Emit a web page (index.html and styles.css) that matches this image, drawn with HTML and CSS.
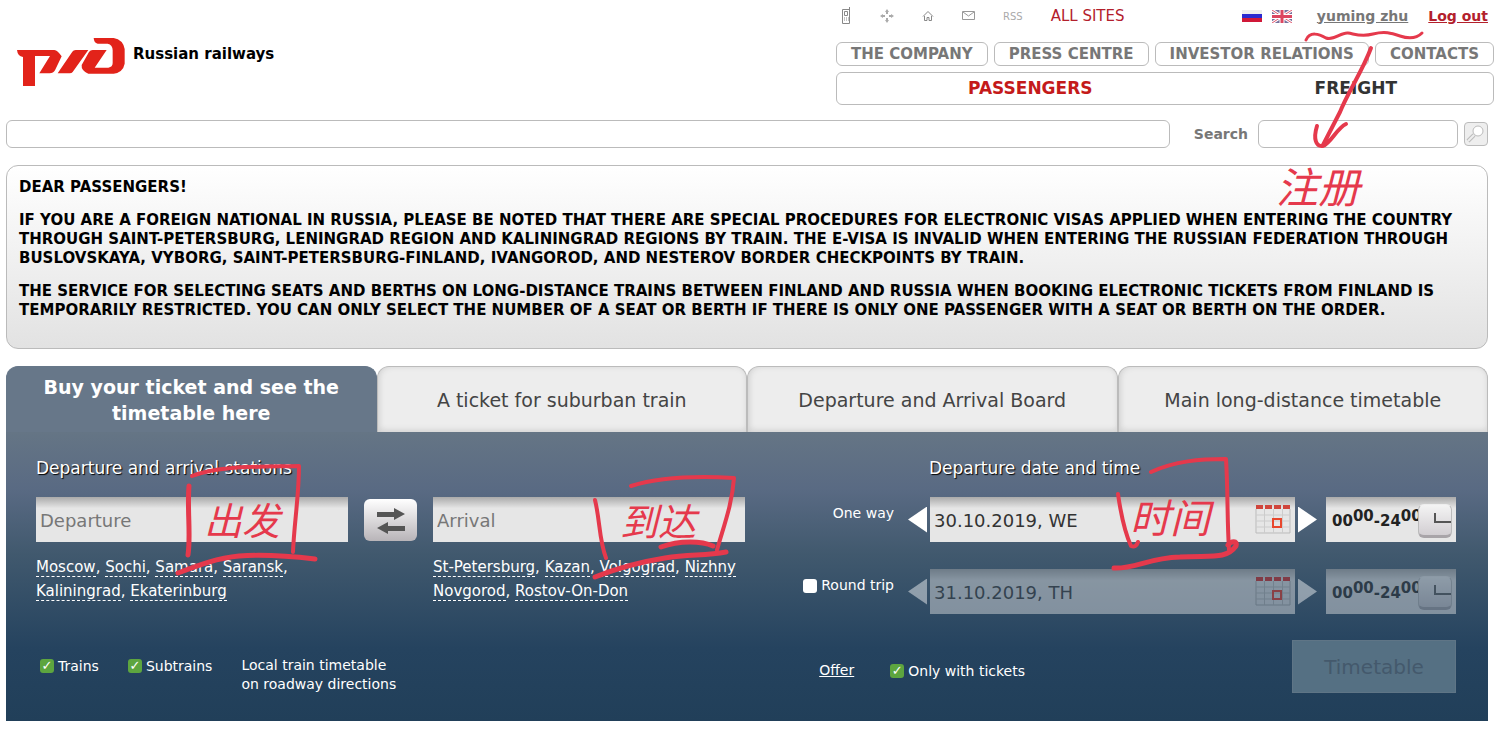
FILE: index.html
```
<!DOCTYPE html>
<html lang="en">
<head>
    <meta charset="utf-8">
    <title>Russian railways</title>
    <link rel="stylesheet" href="styles.css">
</head>
<body>
    <header class="header">
        <a href="#" class="logo">
            <svg width="108" height="50" viewBox="0 0 324 150" fill="#e2231a">
                <path d="M0 39H112Q122 40 134 58L114 100Q109 109 98 109H67L99 57H54V147H18V60Q2 58 0 39Z"/>
                <path d="M122 109L166 44Q169 39 176 39H214L167 105Q164 109 158 109Z"/>
                <path d="M230 3H290Q318 8 323 36V80Q318 106 290 110H214Q192 101 194 84L216 45Q220 39 227 39H269L233 92H274Q287 90 287 78V40Q287 23 272 20H242Q231 18 230 3Z"/>
            </svg>
            <span>Russian railways</span>
        </a>
        <div class="header-right">
            <div class="top-row">
                <div class="tools">
                    <a href="#" aria-label="Mobile"><svg width="12" height="18" viewBox="0 0 12 18" fill="none" stroke="#888"><path d="M2.500 2.500H9.500V16.500H2.500ZM9.500 0V3M4.500 4.500H7.500V8.500H4.500Z"/><path d="M4 11H9M4 13H9" stroke-dasharray="1 1"/></svg></a>
                    <a href="#" aria-label="Site map"><svg width="14" height="14" viewBox="0 0 14 14" fill="#aaa"><path d="M7 0L9 3H8V5H6V3H5ZM7 14L5 11H6V9H8V11H9ZM0 7L3 5V6H5V8H3V9ZM14 7L11 9V8H9V6H11V5Z"/></svg></a>
                    <a href="#" aria-label="Home"><svg width="12" height="12" viewBox="0 0 12 12" fill="none" stroke="#888"><path d="M1 6.500L6 1.500L11 6.500M2.500 6V10.500H5V7.500H7V10.500H9.500V6"/></svg></a>
                    <a href="#" aria-label="Mail"><svg width="13" height="10" viewBox="0 0 13 10" fill="none" stroke="#999"><path d="M.5.5H12.500V8.500H.5ZM1 1L6.500 5L12 1"/></svg></a>
                    <a href="#" class="rss">RSS</a>
                    <a href="#" class="all-sites">ALL SITES</a>
                </div>
                <div class="account">
                    <a href="#" aria-label="Russian"><svg width="20" height="12" viewBox="0 0 20 12"><path fill="#eee" d="M0 0H20V4H0Z"/><path fill="#2a2ad0" d="M0 4H20V8H0Z"/><path fill="#d01838" d="M0 8H20V12H0Z"/></svg></a>
                    <a href="#" aria-label="English"><svg width="20" height="13" viewBox="0 0 20 13"><path fill="#77709b" d="M0 0H20V13H0Z"/><path stroke="#fff" stroke-width="3" d="M0 0L20 13M20 0L0 13"/><path stroke="#e0556c" d="M0 0L20 13M20 0L0 13"/><path stroke="#fff" stroke-width="5" d="M10 0V13M0 6.500H20"/><path stroke="#dc4660" stroke-width="3" d="M10 0V13M0 6.500H20"/></svg></a>
                    <a href="#" class="user">yuming zhu</a>
                    <a href="#" class="logout">Log out</a>
                </div>
            </div>
            <nav class="nav">
                <a href="#">THE COMPANY</a>
                <a href="#">PRESS CENTRE</a>
                <a href="#">INVESTOR RELATIONS</a>
                <a href="#">CONTACTS</a>
            </nav>
            <nav class="main-nav">
                <a href="#" class="active">PASSENGERS</a>
                <a href="#">FREIGHT</a>
            </nav>
            <!-- hand-drawn note: register -->
            <svg class="ink note-register" width="150" height="190" viewBox="1290 25 150 190" aria-hidden="true">
                <path stroke-width="3" d="M1306 40C1310 31 1319 34 1326 38C1334 41 1341 32 1348 33S1361 37 1373 34S1391 33 1400 36S1417 38 1422 33"/>
                <path stroke-width="4" d="M1371 48C1362 72 1348 92 1340 112L1323 145M1317 126C1313 139 1316 147 1323 146C1331 143 1337 128 1346 124"/>
                <text x="1276" y="203" font-size="42">注册</text>
            </svg>
        </div>
    </header>

    <form class="search-row">
        <div class="crumbs"></div>
        <label for="search">Search</label>
        <input type="text" id="search">
        <button type="button" aria-label="Search"><svg width="22" height="22" viewBox="0 0 22 22" fill="none"><path d="M9 12L3 18" stroke="#bbb" stroke-width="4"/><path d="M9 12L3 18" stroke="#eee" stroke-width="2"/><circle cx="13" cy="8" r="5" stroke="#bbb" stroke-width="1" fill="#fff"/></svg></button>
    </form>

    <section class="notice">
        <p>DEAR PASSENGERS!</p>
        <p>IF YOU ARE A FOREIGN NATIONAL IN RUSSIA, PLEASE BE NOTED THAT THERE ARE SPECIAL PROCEDURES FOR ELECTRONIC VISAS APPLIED WHEN ENTERING THE COUNTRY THROUGH SAINT-PETERSBURG, LENINGRAD REGION AND KALININGRAD REGIONS BY TRAIN. THE E-VISA IS INVALID WHEN ENTERING THE RUSSIAN FEDERATION THROUGH BUSLOVSKAYA, VYBORG, SAINT-PETERSBURG-FINLAND, IVANGOROD, AND NESTEROV BORDER CHECKPOINTS BY TRAIN.</p>
        <p>THE SERVICE FOR SELECTING SEATS AND BERTHS ON LONG-DISTANCE TRAINS BETWEEN FINLAND AND RUSSIA WHEN BOOKING ELECTRONIC TICKETS FROM FINLAND IS TEMPORARILY RESTRICTED. YOU CAN ONLY SELECT THE NUMBER OF A SEAT OR BERTH IF THERE IS ONLY ONE PASSENGER WITH A SEAT OR BERTH ON THE ORDER.</p>
    </section>

    <div class="tabs">
        <button type="button" class="tab active">Buy your ticket and see the timetable here</button>
        <button type="button" class="tab">A ticket for suburban train</button>
        <button type="button" class="tab">Departure and Arrival Board</button>
        <button type="button" class="tab">Main long-distance timetable</button>
    </div>

    <form class="panel">
        <div class="search-form">
            <div class="stations">
                <h2>Departure and arrival stations</h2>
                <div class="station-row">
                    <div class="station">
                        <input type="text" class="field" placeholder="Departure" aria-label="Departure">
                        <p class="cities"><a href="#">Moscow</a>, <a href="#">Sochi</a>, <a href="#">Samara</a>, <a href="#">Saransk</a>, <a href="#">Kaliningrad</a>, <a href="#">Ekaterinburg</a></p>
                        <svg class="ink note-departure" width="150" height="120" viewBox="170 458 150 120" aria-hidden="true">
                            <path stroke-width="5" d="M190 486C188 510 192 535 189 555"/>
                            <path stroke-width="4" d="M193 476C218 466 250 467 300 466C300 495 295 525 294 552"/>
                            <path stroke-width="5" d="M179 573C200 565 218 558 240 556C268 554 290 556 316 559"/>
                            <text x="205" y="535" font-size="38">出发</text>
                        </svg>
                    </div>
                    <button type="button" class="swap" aria-label="Swap stations"><svg width="30" height="28" viewBox="0 0 30 28" fill="#555"><path d="M1 6H18V2L29 8L18 14V11H1ZM29 25H12V28L1 22L12 16V20H29Z"/></svg></button>
                    <div class="station">
                        <input type="text" class="field" placeholder="Arrival" aria-label="Arrival">
                        <p class="cities"><a href="#">St-Petersburg</a>, <a href="#">Kazan</a>, <a href="#">Volgograd</a>, <a href="#">Nizhny Novgorod</a>, <a href="#">Rostov-On-Don</a></p>
                        <svg class="ink note-arrival" width="160" height="110" viewBox="585 472 160 110" aria-hidden="true">
                            <path stroke-width="4" d="M595 500C600 520 599 540 606 558M631 486C660 477 700 476 734 478C732 505 724 525 717 550"/>
                            <path stroke-width="5" d="M595 577C620 567 640 562 665 558S705 556 726 552M661 547C680 540 702 541 713 546"/>
                            <text x="620" y="536" font-size="38">到达</text>
                        </svg>
                    </div>
                </div>
            </div>

            <div class="dates">
                <h2>Departure date and time</h2>
                <div class="date-row">
                    <label class="trip" for="date-there">One way</label>
                    <button type="button" class="arrow prev" aria-label="Previous day"></button>
                    <div class="date">
                        <input type="text" class="field" id="date-there" value="30.10.2019, WE">
                        <button type="button" class="calendar" aria-label="Calendar"><svg width="36" height="30" viewBox="0 0 36 30" fill="none"><path stroke="#bbb" d="M1 5V29H35V5"/><path stroke="#ccc" d="M1 11H35M1 17H35M1 23H35M9.500 5V29M18.500 5V29M27.500 5V29"/><path stroke="#d0453c" stroke-width="4" stroke-dasharray="7 2" d="M1 3H35"/><path stroke="#e8472d" stroke-width="2" d="M18 15H26V23H18Z"/></svg></button>
                    </div>
                    <button type="button" class="arrow next" aria-label="Next day"></button>
                    <button type="button" class="time"><span>00<sup>00</sup>-24<sup>00</sup></span><i class="clock"></i></button>
                </div>
                <div class="date-row">
                    <label class="trip"><input type="checkbox" class="check"> Round trip</label>
                    <button type="button" class="arrow prev dim" disabled aria-label="Previous day"></button>
                    <div class="date dim">
                        <input type="text" class="field" value="31.10.2019, TH" aria-label="Return date" disabled>
                        <button type="button" class="calendar" aria-label="Calendar" disabled><svg width="36" height="30" viewBox="0 0 36 30" fill="none"><path stroke="#aaa" d="M1 5V29H35V5"/><path stroke="#bbb" d="M1 11H35M1 17H35M1 23H35M9.500 5V29M18.500 5V29M27.500 5V29"/><path stroke="#d8201c" stroke-width="4" stroke-dasharray="7 2" d="M1 3H35"/><path stroke="#f0301c" stroke-width="2" d="M18 15H26V23H18Z"/></svg></button>
                    </div>
                    <button type="button" class="arrow next dim" disabled aria-label="Next day"></button>
                    <button type="button" class="time dim" disabled><span>00<sup>00</sup>-24<sup>00</sup></span><i class="clock"></i></button>
                </div>
                <svg class="ink note-time" width="140" height="124" viewBox="1105 452 140 124" aria-hidden="true">
                    <path stroke-width="4" d="M1118 494C1121 515 1126 535 1131 546Q1136 548 1138 542M1151 472C1175 461 1200 459 1226 459C1228 490 1227 518 1229 550"/>
                    <path stroke-width="5" d="M1114 568C1135 569 1148 558 1180 557C1210 555 1226 560 1236 546C1238 540 1231 541 1228 545"/>
                    <text x="1130" y="533" font-size="40">时间</text>
                </svg>
            </div>
        </div>

        <div class="bottom-row">
            <div class="filters">
                <label><input type="checkbox" class="check" checked>Trains</label>
                <label><input type="checkbox" class="check" checked>Subtrains</label>
                <a href="#" class="local">Local train timetable<br>on roadway directions</a>
            </div>
            <div class="submit">
                <a href="#" class="offer">Offer</a>
                <label><input type="checkbox" class="check" checked>Only with tickets</label>
                <button type="submit" disabled>Timetable</button>
            </div>
        </div>
    </form>
</body>
</html>
```
FILE: styles.css
```
* {
    box-sizing: border-box;
}

body {
    margin: 0;
    padding: 0 12px 12px 6px;
    font-family: Verdana, "DejaVu Sans", sans-serif;
    font-size: 14px;
    line-height: 19px;
    color: #000;
    background: #fff;
}

button,
input {
    font-family: inherit;
    margin: 0;
}

button {
    padding: 0;
    border: 0;
    background: none;
    cursor: pointer;
}

h2 {
    margin: 0;
    font-size: 17px;
    line-height: 20px;
    font-weight: normal;
    text-shadow: 1px 1px 1px #000;
}

svg {
    display: block;
}

/* header */
.header {
    display: flex;
    justify-content: space-between;
    margin-right: -6px;
}

.logo {
    display: flex;
    align-items: flex-start;
    gap: 8px;
    padding: 37px 0 0 11px;
    color: #000;
    font-size: 15px;
    font-weight: bold;
    text-decoration: none;
}

.logo span {
    margin-top: 8px;
}

.header-right {
    position: relative;
    width: 658px;
}

.top-row {
    display: flex;
    justify-content: space-between;
    height: 42px;
    padding: 6px 6px 0 4px;
}

.tools,
.account {
    display: flex;
    align-items: center;
    height: 20px;
}

.tools {
    gap: 28px;
}

.rss {
    color: #aaa;
    font-size: 10px;
    text-decoration: none;
}

.all-sites {
    color: #b3202c;
    font-size: 15px;
    text-decoration: none;
}

.account {
    gap: 10px;
    font-weight: bold;
}

.user {
    margin: 0 10px 0 15px;
    color: #777;
}

.logout {
    color: #b3202c;
}

.nav {
    display: flex;
    gap: 6px;
}

.nav a {
    flex: auto;
    height: 24px;
    border: 1px solid #bbb;
    border-radius: 6px;
    color: #777;
    font-size: 15px;
    font-weight: bold;
    line-height: 22px;
    text-align: center;
    text-decoration: none;
}

.main-nav {
    display: flex;
    justify-content: space-between;
    margin-top: 6px;
    padding: 0 96px 0 131px;
    border: 1px solid #bbb;
    border-radius: 6px;
    line-height: 31px;
}

.main-nav a {
    color: #333;
    font-size: 17px;
    font-weight: bold;
    text-decoration: none;
}

.main-nav .active {
    color: #c41a1a;
}

/* search */
.search-row {
    display: flex;
    align-items: center;
    margin: 15px 0 17px;
}

.crumbs {
    flex: 1;
    height: 28px;
    border: 1px solid #bbb;
    border-radius: 6px;
}

.search-row label {
    margin: 0 10px 0 24px;
    color: #777;
    font-weight: bold;
}

.search-row input {
    width: 200px;
    height: 28px;
    border: 1px solid #bbb;
    border-radius: 6px;
}

.search-row button {
    margin-left: 6px;
    border: 1px solid #bbb;
    border-radius: 4px;
    background: #eee;
}

/* notice */
.notice {
    min-height: 184px;
    padding: 12px 12px 13px;
    border: 1px solid #bbb;
    border-radius: 12px;
    background: linear-gradient(#fff, #e2e2e2);
    font-size: 15px;
    font-weight: bold;
}

.notice p {
    margin: 0 0 14px;
}

/* tabs */
.tabs {
    display: grid;
    grid-template-columns: repeat(4, 1fr);
    margin-top: 17px;
}

.tab {
    height: 66px;
    padding: 0 32px;
    border: 1px solid #bbb;
    border-bottom: 0;
    border-radius: 12px 12px 0 0;
    background: #ededed;
    box-shadow: inset 0 -3px 6px rgba(0, 0, 0, 0.06), inset 2px 0 6px rgba(0, 0, 0, 0.08);
    color: #444;
    font-size: 19px;
    line-height: 26px;
}

.tab.active {
    border-color: #677789;
    background: #677789;
    box-shadow: none;
    color: #fff;
    font-weight: bold;
}

/* ticket form */
.panel {
    padding: 26px 32px 27px 30px;
    background: linear-gradient(#657585, #596a83 20%, #41596e 42%, #25435f 75%, #213f59);
    color: #fff;
}

.panel a {
    color: #fff;
}

.search-form {
    display: flex;
    gap: 55px;
}

.stations {
    flex: 1;
}

.station-row {
    display: flex;
    gap: 16px;
    margin-top: 19px;
}

.station {
    position: relative;
    flex: 1;
}

.field {
    display: block;
    width: 100%;
    height: 45px;
    padding: 2px 4px 0;
    border: 0;
    border-radius: 0;
    background: linear-gradient(#aaa, #e6e6e6 25%);
    color: #333;
    font-size: 18px;
}

.field::placeholder {
    color: #777;
}

.cities {
    margin: 13px 0 0;
    font-size: 15px;
    line-height: 24px;
}

.cities a {
    border-bottom: 1px dashed #fff;
    text-decoration: none;
}

.swap {
    display: flex;
    align-items: center;
    justify-content: center;
    width: 53px;
    height: 42px;
    margin-top: 2px;
    border-radius: 6px;
    background: linear-gradient(#fff, #b8b4b8);
}

.dates {
    position: relative;
    width: 656px;
}

.dates h2 {
    padding-left: 129px;
}

.date-row {
    display: flex;
    align-items: center;
    margin-top: 19px;
}

.date-row + .date-row {
    margin-top: 27px;
}

.trip {
    display: flex;
    align-items: center;
    justify-content: flex-end;
    gap: 4px;
    width: 94px;
    margin: 0 14px 12px 0;
    white-space: nowrap;
}

.arrow {
    width: 19px;
    height: 26px;
    background: #fff;
}

.prev {
    margin-right: 3px;
    clip-path: polygon(0 50%, 100% 0, 100% 100%);
}

.next {
    margin: 0 9px 0 3px;
    clip-path: polygon(0 0, 100% 50%, 0 100%);
}

.date {
    position: relative;
    flex: 1;
}

.calendar {
    position: absolute;
    top: 7px;
    right: 4px;
}

.time {
    display: flex;
    align-items: center;
    width: 130px;
    height: 45px;
    padding: 2px 4px 0 6px;
    background: linear-gradient(#aaa, #e6e6e6 25%);
    color: #222;
    font-size: 15px;
    font-weight: bold;
}

.time sup {
    font-size: 15px;
    line-height: 0;
    vertical-align: 5px;
}

.clock {
    position: relative;
    flex: none;
    width: 34px;
    height: 34px;
    margin-left: -4px;
    border: 1px solid #bbb;
    border-top-color: #eee;
    border-bottom: 3px solid #a8a4a8;
    border-radius: 6px;
    background: linear-gradient(#f4f4f4, #d2ced2);
}

.clock::after {
    content: "";
    position: absolute;
    top: 8px;
    left: 15px;
    width: 15px;
    height: 8px;
    border: solid #555;
    border-width: 0 0 2px 2px;
}

.dim {
    opacity: 0.45;
}

.check {
    width: 14px;
    height: 14px;
    appearance: none;
    border-radius: 3px;
    background: #fff;
    text-align: center;
}

.check:checked {
    background: #5da53f;
}

.check:checked::before {
    content: "✓";
    display: block;
    color: #fff;
    font-size: 13px;
    line-height: 14px;
}

.bottom-row {
    display: flex;
    justify-content: space-between;
    margin-top: 25px;
}

.filters,
.submit {
    display: flex;
}

.filters {
    gap: 29px;
    padding: 17px 0 0 4px;
}

.bottom-row label {
    display: flex;
    align-items: center;
    gap: 4px;
    height: 20px;
}

.filters .local {
    text-decoration: none;
}

.submit {
    align-items: center;
}

.submit label {
    margin: 9px 267px 0 36px;
}

.offer {
    margin-top: 8px;
}

.submit button {
    width: 164px;
    height: 53px;
    border: 1px solid #5f7586;
    background: #557083;
    color: #44596c;
    font-size: 20px;
}

/* red pen notes drawn over the page */
.ink {
    position: absolute;
    overflow: visible;
    fill: none;
    stroke: #e5394c;
    stroke-linecap: round;
    stroke-linejoin: round;
    pointer-events: none;
}

.ink text {
    fill: #e5394c;
    stroke: none;
    font-family: "Noto Sans CJK SC", sans-serif;
    font-style: italic;
}

.note-register {
    top: 25px;
    right: 54px;
}

.note-departure {
    top: -39px;
    right: 29px;
}

.note-arrival {
    top: -25px;
    right: 0;
}

.note-time {
    top: -6px;
    right: 211px;
}
```
